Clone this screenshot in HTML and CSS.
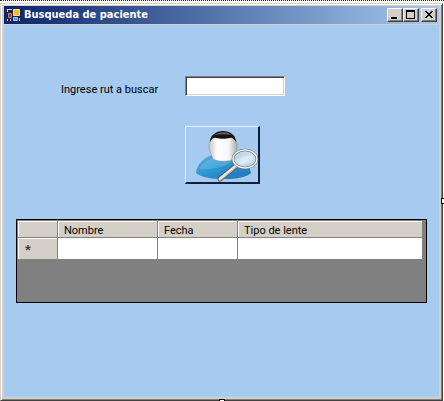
FILE: index.html
```
<!DOCTYPE html>
<html lang="es">
<head>
<meta charset="utf-8">
<title>Busqueda de paciente</title>
<link rel="stylesheet" href="styles.css">
</head>
<body>
<div class="surface">
  <main class="window">
    <header class="titlebar">
      <svg class="app-icon" viewBox="0 0 14 14" aria-hidden="true">
        <path fill="#18234c" d="M0 1h14v12H0z"/>
        <path fill="#c8ccdc" d="M0 1h5v1H1v2H0zM0 11h1v2H0zM3 11h1v2H3zM12 10h1v3h-1z"/>
        <path fill="#f0bc30" stroke="#ffe880" d="M6.500 1.500h6v6h-6z"/>
        <path fill="#b02820" stroke="#e07868" d="M1.500 5.500h3v4h-3z"/>
        <path fill="#5090e8" stroke="#a8ccff" d="M6.500 9.500h4v3h-4z"/>
      </svg>
      <h1 class="title">Busqueda de paciente</h1>
      <div class="controls">
        <button class="control" type="button" aria-label="Minimizar"><svg viewBox="0 0 12 10"><path fill="#000" d="M2 7h6v2H2z"/></svg></button>
        <button class="control" type="button" aria-label="Maximizar"><svg viewBox="0 0 12 10"><path fill="#000" fill-rule="evenodd" d="M1 0h9v9H1zM2 2v6h7V2z"/></svg></button>
        <button class="control control-close" type="button" aria-label="Cerrar"><svg viewBox="0 0 12 10"><path fill="#000" d="M2 1h2v1h1v1h2V2h1V1h2v1H9v1H8v1H7v1h1v1h1v1h1v1H8V7H7V6H5v1H4v1H2V7h1V6h1V5h1V4H4V3H3V2H2z"/></svg></button>
      </div>
    </header>
    <form class="content">
      <div class="search">
        <label class="label" for="rut">Ingrese rut a buscar</label>
        <input class="rut" id="rut" type="text">
        <button class="find" type="button" aria-label="Buscar paciente">
          <svg viewBox="0 0 72 55" aria-hidden="true">
            <defs>
              <linearGradient id="shirt" x1="0" y1="0" x2="1" y2="1">
                <stop offset="0" stop-color="#5cb2e0"/><stop offset=".5" stop-color="#2b93cf"/><stop offset="1" stop-color="#1c75b2"/>
              </linearGradient>
              <linearGradient id="face">
                <stop offset="0" stop-color="#c4c4c6"/><stop offset=".3" stop-color="#fff"/><stop offset=".7" stop-color="#f6f6f6"/><stop offset="1" stop-color="#aaa"/>
              </linearGradient>
              <linearGradient id="lens" x1="0" y1="0" x2="1" y2="1">
                <stop offset="0" stop-color="#a9cbe4"/><stop offset=".55" stop-color="#d2e4f2"/><stop offset="1" stop-color="#a6bfd5"/>
              </linearGradient>
            </defs>
            <path fill="url(#shirt)" d="M10 46c1-9 7-15 17-18h21c9 3 15 9 17 18-5 4-13 6-27 6-14 0-23-2-28-6z"/>
            <path fill="#8bd0f2" opacity=".3" d="M13 42c3-6 8-9 15-11 4 5 15 5 20 0-5 9-20 12-35 11z"/>
            <path fill="#d5dde3" d="M27 29c5 3 16 3 21 0-1 7-20 7-21 0z"/>
            <path fill="url(#face)" stroke="#888" stroke-width=".5" d="M24 13c3-5 23-5 26 0 2 5 1 10-1 14l-1 5c-5 3-16 3-21 0l-2-5c-2-4-3-9-1-14z"/>
            <path fill="#171315" d="M24 15c0-7 6-11 13-11s13 4 13 11c-2-3-4-5-6-4-4 1-10 1-14 0-3-1-4 1-6 4z"/>
            <path fill="#6d615c" d="M29 8c4-3 12-4 16 0-5-1-11-1-16 0z"/>
            <path stroke="#555b61" stroke-width="5" stroke-linecap="round" d="M50 39L34 52"/>
            <path stroke="#e9ecee" stroke-width="3" stroke-linecap="round" d="M50 39L34 52"/>
            <path stroke="#a4a9ad" d="M50 40L35 53"/>
            <ellipse cx="59" cy="32" rx="12" ry="9" fill="url(#lens)" stroke="#62686d" stroke-width="2.500"/>
            <ellipse cx="59" cy="32" rx="12" ry="9" fill="none" stroke="#f3f3f1" stroke-width="1.500"/>
            <path fill="#fff" opacity=".3" d="M51 34c4-5 10-6 17-5 0 5-5 8-9 8-4 0-7-1-8-3z"/>
          </svg>
        </button>
      </div>
      <div class="grid">
        <table class="table">
          <thead>
            <tr><th class="col-mark"></th><th class="col-name">Nombre</th><th class="col-date">Fecha</th><th>Tipo de lente</th></tr>
          </thead>
          <tbody>
            <tr><th class="mark" scope="row">*</th><td></td><td></td><td></td></tr>
          </tbody>
        </table>
      </div>
    </form>
  </main>
  <span class="handle handle-right"></span>
  <span class="handle handle-bottom"></span>
</div>
</body>
</html>
```
FILE: styles.css
```
* { box-sizing: border-box; }

body {
  margin: 0;
  background: #fff;
  color: #000;
  font: 11px/14px Roboto, "Liberation Sans", Arial, sans-serif;
}

.surface {
  position: relative;
  display: flex;
  flex-direction: column;
  min-height: 100vh;
  padding: 2px 1px 0 0;
  overflow: hidden;
  border-top: 1px dotted #222;
}

.window {
  flex: 1;
  display: flex;
  flex-direction: column;
  border: 1px solid #d4d0c8;
  border-right-color: #404040;
  border-bottom-color: #404040;
  background: #a6caf0;
  box-shadow: inset 1px 1px #fff, inset -1px -1px #808080, inset 0 0 0 3px #d4d0c8;
  padding: 2px 3px 3px;
}

.titlebar {
  display: flex;
  align-items: center;
  height: 19px;
  padding: 0 2px 0 3px;
  border-bottom: 1px solid #d4d0c8;
  background: linear-gradient(90deg, #0a246a, #a6caf0);
}

.app-icon { width: 14px; height: 14px; }

.title {
  flex: 1;
  margin: 0 0 0 3px;
  color: #fff;
  font: bold 11px/18px "DejaVu Sans Condensed", "DejaVu Sans", sans-serif;
}

.controls { display: flex; }

.control {
  width: 16px;
  height: 14px;
  padding: 1px;
  border: 1px solid #fff;
  border-right-color: #404040;
  border-bottom-color: #404040;
  background: #d4d0c8;
  box-shadow: inset -1px -1px #808080;
}

.control svg { display: block; width: 12px; height: 10px; }
.control-close { margin-left: 2px; }

.content {
  flex: 1;
  padding: 51px 12px 0;
}

.search {
  display: grid;
  grid-template-columns: 124px 100px;
  justify-items: start;
  align-items: end;
  row-gap: 30px;
  padding-left: 45px;
}

.label { line-height: 12px; }

.rut {
  width: 100px;
  height: 20px;
  padding: 1px 2px;
  border: 1px solid #808080;
  border-right-color: #fff;
  border-bottom-color: #fff;
  border-radius: 0;
  background: #fff;
  box-shadow: inset 1px 1px #404040, inset -1px -1px #d4d0c8;
  font: inherit;
}

.find {
  grid-column: 2;
  width: 75px;
  height: 58px;
  padding: 0;
  border: 1px solid #e4effb;
  border-right: 2px solid #10203c;
  border-bottom: 2px solid #10203c;
  background: #a6caf0;
}

.find svg { display: block; width: 72px; height: 55px; fill: none; }

.grid {
  min-height: 84px;
  margin-top: 35px;
  padding: 1px 4px 0 1px;
  border: 1px solid #000;
  background: #808080;
}

.table {
  width: 100%;
  table-layout: fixed;
  border-collapse: separate;
  border-spacing: 0;
}

.table th, .table td {
  padding: 0;
  border-right: 1px solid #808080;
}

.table th:last-child, .table td:last-child { border-right: 0; }

.table thead th {
  height: 17px;
  padding: 3px 0 0 6px;
  border-bottom: 1px solid #808080;
  background: #d4d0c8;
  box-shadow: inset 1px 1px #fff;
  font-weight: normal;
  line-height: 13px;
  text-align: left;
}

.table td { height: 21px; background: #fff; }
.table .col-mark { width: 40px; }
.table .col-name { width: 100px; }
.table .col-date { width: 80px; }

.table .mark {
  padding: 2px 0 0 7px;
  background: #d4d0c8;
  box-shadow: inset 1px 1px #fff;
  color: #404040;
  font: bold 15px/14px "Liberation Sans", Arial, sans-serif;
  text-align: left;
  text-shadow: 0 0 1px #fff;
}

.handle {
  position: absolute;
  width: 6px;
  height: 6px;
  border: 1px solid #000;
  background: #fff;
}

.handle-right { right: -3px; top: calc(50% - 3px); }
.handle-bottom { bottom: -4px; left: calc(50% - 3px); }
```
